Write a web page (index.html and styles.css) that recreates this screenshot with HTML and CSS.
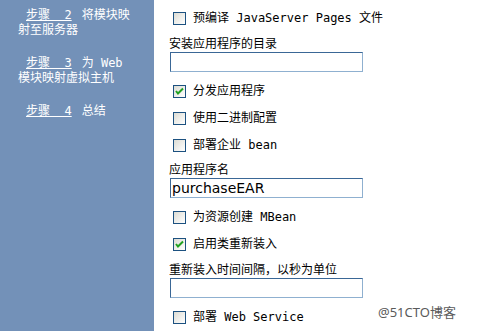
FILE: index.html
```html
<!DOCTYPE html>
<html lang="zh-CN">
<head>
    <meta charset="UTF-8">
    <title>安装应用程序</title>
    <link rel="stylesheet" href="styles.css">
</head>
<body>
    <div class="pagina">
        <div class="lateral">
            <p class="paso"><a href="#">步骤&nbsp;&nbsp;2</a>将模块映射至服务器</p>
            <p class="paso"><a href="#">步骤&nbsp;&nbsp;3</a>为 Web 模块映射虚拟主机</p>
            <p class="paso"><a href="#">步骤&nbsp;&nbsp;4</a>总结</p>
        </div>

        <div class="contenido">
            <label class="opcion"><span class="caja"></span>预编译 JavaServer Pages 文件</label>

            <div class="campo">
                <label>安装应用程序的目录</label>
                <input type="text" value="">
            </div>

            <label class="opcion"><span class="caja marcada"><svg width="11" height="11" viewBox="0 0 11 11"><path d="M2 5 L4 7.5 L9 2.5" fill="none" stroke="#21a121" stroke-width="2"/></svg></span>分发应用程序</label>
            <label class="opcion"><span class="caja"></span>使用二进制配置</label>
            <label class="opcion"><span class="caja"></span>部署企业 bean</label>

            <div class="campo">
                <label>应用程序名</label>
                <input type="text" value="purchaseEAR">
            </div>

            <label class="opcion"><span class="caja"></span>为资源创建 MBean</label>
            <label class="opcion"><span class="caja marcada"><svg width="11" height="11" viewBox="0 0 11 11"><path d="M2 5 L4 7.5 L9 2.5" fill="none" stroke="#21a121" stroke-width="2"/></svg></span>启用类重新装入</label>

            <div class="campo">
                <label>重新装入时间间隔，以秒为单位</label>
                <input type="text" value="">
            </div>

            <label class="opcion"><span class="caja"></span>部署 Web Service</label>
        </div>
    </div>

    <div class="marca">@51CTO博客</div>
</body>
</html>
```

FILE: styles.css
```css
body {
    margin: 0;
    padding: 0;
    background: white;
    font-family: "DejaVu Sans Mono", "Noto Sans CJK SC", monospace;
    font-size: 12px;
    color: black;
    height: 331px;
    overflow: hidden;
}
.pagina {
    display: flex;
    height: 331px;
}
.lateral {
    width: 154px;
    flex-shrink: 0;
    background: #7391b8;
    color: white;
    padding-top: 8px;
    box-sizing: border-box;
}
.paso {
    margin: 0 0 18px 0;
    padding-left: 18px;
    width: 113px;
    line-height: 15px;
    text-indent: 8px;
}
.paso a {
    display: inline-block;
    text-indent: 0;
    line-height: 15px;
    color: white;
    text-decoration: underline;
    margin-right: 10px;
}
.contenido {
    padding: 5px 0 0 15px;
    display: flex;
    flex-direction: column;
    flex: 1;
}
.opcion {
    display: flex;
    align-items: flex-start;
    height: 27px;
    padding-left: 4px;
    box-sizing: border-box;
    padding-top: 7px;
    line-height: 13px;
    white-space: nowrap;
}
.caja {
    width: 11px;
    height: 11px;
    border: 1px solid #1c5180;
    background: linear-gradient(135deg, #dcdcd4, #ffffff);
    margin-right: 7px;
    flex-shrink: 0;
}
.caja svg {
    display: block;
}
.campo {
    display: flex;
    flex-direction: column;
    margin-bottom: 6px;
}
.campo label {
    height: 20px;
    line-height: 14px;
    padding-top: 5px;
    box-sizing: border-box;
}
.campo input {
    width: 193px;
    height: 20px;
    box-sizing: border-box;
    margin: 0 0 0 1px;
    border: 1px solid;
    border-color: #3a6796 #8fb0d0 #8fb0d0 #3a6796;
    padding: 0 1px;
    font-family: "DejaVu Sans", sans-serif;
    font-size: 14px;
    color: black;
    outline: none;
}
.marca {
    position: absolute;
    left: 378px;
    top: 302px;
    color: #5a5a5a;
    font-family: "Noto Sans", "Noto Sans CJK SC", sans-serif;
    font-size: 13px;
}
```
